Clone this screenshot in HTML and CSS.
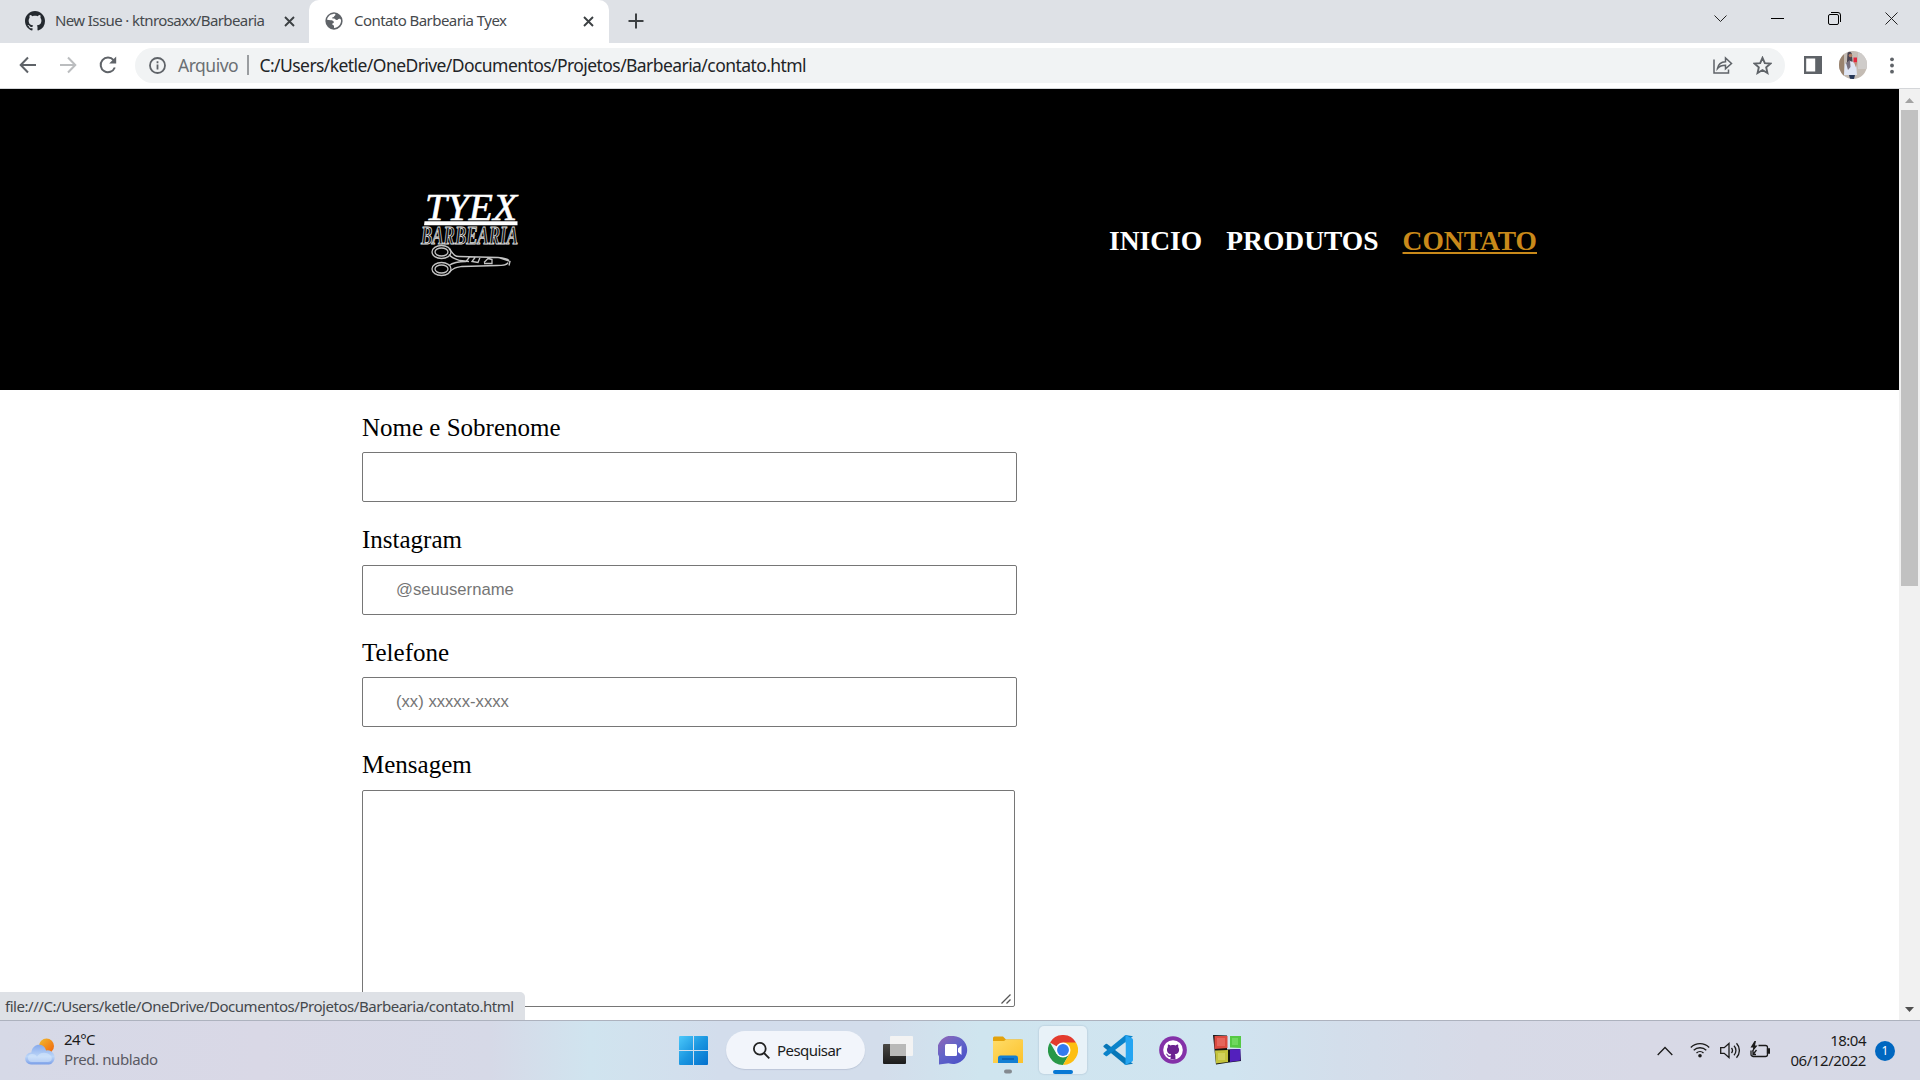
FILE: index.html
```html
<!DOCTYPE html>
<html lang="pt-BR">
<head>
<meta charset="utf-8">
<title>Contato Barbearia Tyex</title>
<link rel="stylesheet" href="styles.css">
</head>
<body>
<div class="screen">
  <div class="tabstrip">
    <div class="tab">
      <svg class="favicon" viewBox="0 0 16 16"><path fill="#24292f" d="M8 0C3.58 0 0 3.58 0 8c0 3.54 2.29 6.53 5.47 7.59.4.07.55-.17.55-.38 0-.19-.01-.82-.01-1.49-2.01.37-2.53-.49-2.69-.94-.09-.23-.48-.94-.82-1.13-.28-.15-.68-.52-.01-.53.63-.01 1.08.58 1.23.82.72 1.21 1.87.87 2.33.66.07-.52.28-.87.51-1.07-1.78-.2-3.64-.89-3.64-3.95 0-.87.31-1.59.82-2.15-.08-.2-.36-1.02.08-2.12 0 0 .67-.21 2.2.82.64-.18 1.32-.27 2-.27s1.36.09 2 .27c1.53-1.04 2.2-.82 2.2-.82.44 1.1.16 1.92.08 2.12.51.56.82 1.27.82 2.15 0 3.07-1.87 3.75-3.65 3.95.29.25.54.73.54 1.48 0 1.07-.01 1.93-.01 2.2 0 .21.15.46.55.38A8.01 8.01 0 0 0 16 8c0-4.42-3.58-8-8-8z"/></svg>
      <span class="tab-title t-issue">New Issue · ktnrosaxx/Barbearia</span>
      <svg class="close" viewBox="0 0 11 11"><path d="M1 1l9 9M10 1l-9 9"/></svg>
    </div>
    <div class="tab active">
      <svg class="favicon" viewBox="0 0 20 20"><circle cx="10" cy="10" r="9.6" fill="#5f6368"/><path fill="#fff" d="M9.2 2.1c1.6-.2 2.4.2 2.4.9 0 1.100-1.500 1-1.500 1.900s-2.200.5-2.200 1.600c0 .8 1 .8 2 .8 1.700 0 1.500 1.700 2.900 1.700 1.500 0 1.600-1.500 3-1.500.9 0 1.700.6 2 1.500.3 5-3.300 8.600-7.800 8.800v-2.200c0-1.200-2-1-2-2.300 0-.9 1.800-.6 1.800-1.900 0-1.700-1.800-2-3.600-2.100L2.300 8.500C2.900 5 5.700 2.400 9.200 2.100z"/></svg>
      <span class="tab-title t-contact">Contato Barbearia Tyex</span>
      <svg class="close" viewBox="0 0 11 11"><path d="M1 1l9 9M10 1l-9 9"/></svg>
    </div>
    <svg class="newtab" viewBox="0 0 16 16"><path d="M8 .5v15M.5 8h15"/></svg>
    <div class="wincontrols">
      <svg width="13" height="13" viewBox="0 0 13 13"><path d="M.5 3.500l6 6 6-6"/></svg>
      <svg width="13" height="13" viewBox="0 0 13 13"><path d="M0 6.500h13" stroke="#000"/></svg>
      <svg width="13" height="13" viewBox="0 0 13 13"><rect x=".5" y="2.500" width="10" height="10" rx="1.500" stroke="#000"/><path d="M3 .5h7a2.500 2.500 0 0 1 2.500 2.500v7" stroke="#000"/></svg>
      <svg width="13" height="13" viewBox="0 0 13 13"><path d="M.5.5l12 12M12.500.5l-12 12"/></svg>
    </div>
  </div>

  <div class="toolbar">
    <div class="navbtns">
      <svg viewBox="0 0 18 18"><path d="M17 9H2M9 1.500L1.700 9 9 16.500"/></svg>
      <svg class="disabled" viewBox="0 0 18 18"><path d="M1 9h15M9 1.500L16.300 9 9 16.500"/></svg>
      <svg viewBox="0 0 18 18"><path d="M15.800 11.500a7.300 7.300 0 1 1-1.200-7.300l1.400 1.600"/><path d="M17.200.5v7h-7z" fill="#5f6368" stroke="none"/></svg>
    </div>
    <div class="omnibox">
      <svg class="info" viewBox="0 0 17 17"><circle cx="8.500" cy="8.500" r="7.500"/><path d="M8.500 7.500v5M8.500 4.300v2"/></svg>
      <span class="scheme">Arquivo</span>
      <span class="sep"></span>
      <span class="url">C:/Users/ketle/OneDrive/Documentos/Projetos/Barbearia/contato.html</span>
      <svg class="share" viewBox="0 0 20 18"><path d="M1 3.500V17h14.500v-3.500M4.500 12.500c.8-4.500 3.500-6.500 8-6.700V2l6 5.500-6 5.300V9.300c-3.500 0-6 .8-8 3.200z"/></svg>
      <svg class="star" viewBox="0 0 18 18"><path d="M9 1.700l2.200 5 5.300.5-4 3.600 1.200 5.300L9 13.300l-4.700 2.800 1.200-5.300-4-3.600 5.300-.5z"/></svg>
    </div>
    <svg class="panel" viewBox="0 0 18 18"><path fill="#5f6368" d="M0 0h18v18H0zM2.200 2.500v13h9v-13z" fill-rule="evenodd"/></svg>
    <svg class="avatar" viewBox="0 0 28 28">
      <defs><clipPath id="av"><circle cx="14" cy="14" r="14"/></clipPath></defs>
      <g clip-path="url(#av)">
        <rect width="28" height="28" fill="#c4bcb4"/><rect width="5" height="28" fill="#99836f"/><rect x="19" width="9" height="18" fill="#cfccca"/>
        <path d="M8.500 2c2-2.500 5-1 4.500 3l.5 5-2 6-4 2z" fill="#4a4450"/><circle cx="11.500" cy="4.500" r="1.800" fill="#b27d63"/>
        <path d="M6 13l5-3 6 2 1 12H5z" fill="#dfe6f5"/><path d="M10 24h6l-1 4h-4z" fill="#253657"/>
        <path d="M7 12l4-3 .5 7-2.500 3z" fill="#77717e"/><rect x="14.500" y="6.500" width="3.500" height="5" fill="#e4263c"/><path d="M15 11.500h3l-1 5z" fill="#bb8973"/>
      </g>
    </svg>
    <svg class="dots" viewBox="0 0 4 17"><circle cx="2" cy="2.300" r="1.900"/><circle cx="2" cy="8.500" r="1.900"/><circle cx="2" cy="14.700" r="1.900"/></svg>
  </div>

  <div class="viewport">
    <div class="page">
      <header class="site-header">
        <svg class="logo" viewBox="0 0 104 90" width="104" height="90">
          <g class="logo-title"><text x="5" y="28.500" textLength="92" lengthAdjust="spacingAndGlyphs">TYEX</text></g>
          <path d="M4.500 30.300h93v3.900H4z" fill="#fff"/>
          <g class="logo-sub"><text x="1" y="52.500" textLength="97" lengthAdjust="spacingAndGlyphs">BARBEARIA</text></g>
          <g transform="translate(0 1.500)" fill="none" stroke="#c4c4c4" stroke-width="1.300">
            <ellipse cx="21.500" cy="59.500" rx="9.500" ry="6.500"/><ellipse cx="21.500" cy="59.500" rx="6.500" ry="4"/>
            <ellipse cx="21.500" cy="76.500" rx="9.500" ry="6.500"/><ellipse cx="21.500" cy="76.500" rx="6.500" ry="4"/>
            <path d="M29 56c4 5 5 8 10 8l39 1c6 .5 10 2 11 3M29 62c3 4 8 5 11 6l9 1M29 80c5-5 7-5 13-6l35-1c5 0 10 0 11-3M29 73c4-3 9-4 17-4l4-5M55 65l-3 4 6 1 2-5M64 70l4-4 4 1v4h-8M78 65l12 4-1 4"/>
          </g>
        </svg>
        <nav class="menu">
          <a>INICIO</a><a>PRODUTOS</a><a class="current">CONTATO</a>
        </nav>
      </header>
      <form class="form">
        <label>Nome e Sobrenome</label>
        <input type="text">
        <label>Instagram</label>
        <input type="text" placeholder="@seuusername">
        <label>Telefone</label>
        <input type="text" placeholder="(xx) xxxxx-xxxx">
        <label>Mensagem</label>
        <div class="message">
          <textarea></textarea>
          <svg class="grip" viewBox="0 0 10 10"><path d="M.5 9.500l9-9M5.500 9.500l4-4"/></svg>
        </div>
      </form>
      <div class="status"><span>file:///C:/Users/ketle/OneDrive/Documentos/Projetos/Barbearia/contato.html</span></div>
    </div>
    <div class="scrollbar">
      <svg class="arrow" viewBox="0 0 9 5"><path d="M0 5l4.500-5L9 5z" fill="#a3a3a3"/></svg>
      <div class="thumb"></div>
      <svg class="arrow down" viewBox="0 0 9 5"><path d="M0 0l4.500 5L9 0z" fill="#505050"/></svg>
    </div>
  </div>

  <div class="taskbar">
    <div class="weather">
      <svg viewBox="0 0 30 27" width="30" height="27">
        <defs><linearGradient id="sun" x1="0" y1="0" x2="1" y2="1"><stop offset="0" stop-color="#f0bd2e"/><stop offset="1" stop-color="#f2600c"/></linearGradient>
        <linearGradient id="cl" x1="0" y1="0" x2="0" y2="1"><stop offset="0" stop-color="#86a9ec"/><stop offset=".6" stop-color="#bcd6f8"/><stop offset="1" stop-color="#7b9fe8"/></linearGradient></defs>
        <circle cx="21.500" cy="8" r="7.500" fill="url(#sun)"/>
        <path d="M6 26.500a5.800 5.800 0 0 1 .3-12C7.500 4.500 19.500 4.500 21 12.500a7 7 0 0 1 3 14z" fill="url(#cl)"/>
        <path d="M7 24a4 4 0 0 1 0-8c3 0 4 1 5 3 2-5 10-6 14-1 2 3 0 6-3 6z" fill="#d8eafc" opacity=".55"/>
      </svg>
      <div class="wtext"><span class="temp">24°C</span><span class="cond">Pred. nublado</span></div>
    </div>
    <div class="apps">
      <svg class="app start" viewBox="0 0 29 29"><defs><linearGradient id="win" x1="0" y1="0" x2="1" y2="1"><stop offset="0" stop-color="#4cc8fa"/><stop offset=".5" stop-color="#1b96e0"/><stop offset="1" stop-color="#0370cd"/></linearGradient></defs><path fill="url(#win)" d="M1 0h13v14H0V1a1 1 0 0 1 1-1zM15 0h13a1 1 0 0 1 1 1v13H15zM0 15h14v14H1a1 1 0 0 1-1-1zM15 15h14v13a1 1 0 0 1-1 1H15z"/></svg>
      <div class="search">
        <svg viewBox="0 0 17 17"><circle cx="6.800" cy="6.800" r="5.900"/><path d="M11 11l5.300 5.300"/></svg>
        <span>Pesquisar</span>
      </div>
      <svg class="app taskview" viewBox="0 0 30 28"><defs><linearGradient id="tv" x1="0" y1="0" x2="0" y2="1"><stop offset="0" stop-color="#4a4946"/><stop offset="1" stop-color="#1c1c1c"/></linearGradient></defs><rect y="8" width="23" height="20" rx="1" fill="url(#tv)"/><rect x="7" width="23" height="20" rx="1" fill="#f3f3f3"/><path d="M7 8h16v12H8a1 1 0 0 1-1-1z" fill="#b9b9b8"/></svg>
      <svg class="app chat" viewBox="0 0 30 29"><defs><linearGradient id="ch" x1="0" y1="0" x2=".8" y2="1"><stop offset="0" stop-color="#9565b5"/><stop offset=".5" stop-color="#6364c8"/><stop offset="1" stop-color="#4b50c8"/></linearGradient></defs><path d="M15.500 0a14 14 0 1 1-5 27.200L1 28.500v-8A14 14 0 0 1 15.500 0z" fill="url(#ch)"/><rect x="7" y="8" width="12" height="12" rx="1.500" fill="#fff"/><path d="M20 12.500l3.500-3v9.500L20 16z" fill="#fff"/></svg>
      <svg class="app folder" viewBox="0 0 30 38"><defs><linearGradient id="fo" x1="0" y1="0" x2="1" y2="1"><stop offset="0" stop-color="#ffdc68"/><stop offset="1" stop-color="#fcc22c"/></linearGradient></defs><path d="M0 2a1.500 1.500 0 0 1 1.500-1.500h8.500l3 3H28a2 2 0 0 1 2 2V12H0z" fill="#e3a20b"/><path d="M0 5h11l2-1.500h17V27H0z" fill="url(#fo)"/><path d="M5 27v-5a2.500 2.500 0 0 1 2.500-2.500h15A2.500 2.500 0 0 1 25 22v5z" fill="#137fd3"/><path d="M9 23h12" stroke="#0a539f" stroke-width="1.200"/><rect x="11" y="33.500" width="8" height="4" rx="2" fill="#848a90"/></svg>
      <div class="chrome-cell">
        <svg viewBox="0 0 48 48" width="30" height="30"><path d="M24 24L3.200 12A24 24 0 0 1 44.800 12z" fill="#e33b2e"/><path d="M3.200 12L13.600 30 34.400 30 24 48A24 24 0 0 1 3.200 12z" fill="#279847"/><path d="M24 12h20.800A24 24 0 0 1 24 48l10.400-18z" fill="#fdbf12"/><circle cx="24" cy="24" r="12" fill="#fff"/><circle cx="24" cy="24" r="9.500" fill="#327bf0"/></svg>
        <span class="running"></span>
      </div>
      <svg class="app vscode" viewBox="0 0 100 100"><path d="M2 36l7-6q2.500-1.500 5 0L100 96l-25 4L2 40q-2-2 0-4z" fill="#0777b8"/><path d="M2 64l7 6q2.500 1.500 5 0L100 4 75 0 2 60q-2 2 0 4z" fill="#0a83ca"/><path d="M70.900 99.300a6 6 0 0 0 4.800-.2l20.600-9.900A6.300 6.300 0 0 0 100 83.600V16.400c0-2.400-1.400-4.600-3.500-5.600L75.900.9a6.200 6.200 0 0 0-7.100 1.200C71 0 75 1.500 75 5v90c0 3.500-4 5-6.200 2.900z" fill="#25a5f2"/><path d="M75 27v46L45 50z" fill="#d3e4ee"/></svg>
      <svg class="app ghd" viewBox="-2 -2 20 20"><circle cx="8" cy="8" r="9.900" fill="#8431a8"/><circle cx="8" cy="8" r="7" fill="#fff"/><path transform="translate(1.200 1.300) scale(.85)" fill="#6b2390" d="M5.470 15.500c.4.070.55-.17.55-.38v-1.490c-2.010.37-2.530-.49-2.690-.94-.09-.23-.48-.94-.82-1.130-.28-.15-.68-.52-.01-.53.63-.01 1.080.58 1.230.82.72 1.210 1.870.87 2.330.66.070-.52.280-.87.510-1.070-1.780-.2-3.640-.89-3.640-3.950 0-.87.31-1.590.82-2.150-.08-.2-.36-1.020.08-2.120 0 0 .67-.21 2.200.82.640-.18 1.320-.27 2-.27s1.360.09 2 .27c1.530-1.040 2.200-.82 2.200-.82.440 1.100.16 1.920.08 2.120.51.56.82 1.270.82 2.150 0 3.070-1.870 3.750-3.650 3.950.29.25.54.73.54 1.480v2.700c0 .21.150.46.550.38z"/></svg>
      <svg class="app blocks" viewBox="0 0 29 30"><path d="M0 0l14 .5v14l13-.5 1 12-12 1.500-13 2z" fill="#111"/><path d="M1.500 1h13v12l-13 1z" fill="#dc4a40"/><path d="M17 1h11v12l-11-.5z" fill="#55c944"/><path d="M2 15.500l13-.5v12l-12 1.500z" fill="#c3c33c"/><path d="M17 14.500l10.500-.5v11.500L17 27z" fill="#5320bd"/><path d="M4 3h8v8H4z" fill="#f08078" opacity=".5"/><path d="M19 3h6v7h-6z" fill="#8ae878" opacity=".5"/><path d="M5 18h7v7H5z" fill="#e0df78" opacity=".5"/></svg>
    </div>
    <div class="tray">
      <svg width="16" height="10" viewBox="0 0 16 10"><path d="M.7 9L8 1.500 15.300 9"/></svg>
      <svg class="wifi" width="20" height="16" viewBox="0 0 20 16"><path d="M.8 5.500a13 13 0 0 1 18.400 0M3.700 8.300a9 9 0 0 1 12.600 0M6.500 11a5 5 0 0 1 7 0"/><circle cx="10" cy="13.700" r="1.800" fill="#1b1b1b" stroke="none"/></svg>
      <svg class="vol" width="20" height="17" viewBox="0 0 20 17"><path d="M.7 5.700h3.500L9 1.500v14l-4.800-4.200H.7zM11.500 6a4 4 0 0 1 0 5M14 3.700a7 7 0 0 1 0 9.600M16.500 1.300a10.500 10.500 0 0 1 0 14.400"/></svg>
      <svg class="bat" width="20" height="18" viewBox="0 0 20 18"><path d="M8.500 4.500h7a2 2 0 0 1 2 2v7a2 2 0 0 1-2 2H3a2 2 0 0 1-2-2V9.500"/><path d="M17.500 8h2v4h-2z" fill="#1b1b1b"/><path d="M4.500 0L.5 6.500h2.700L2.300 11 7.500 4.500H5L6 0z" fill="#1b1b1b" stroke="none"/><path d="M3 9v4.500L6.500 9M3 13.500h3"/></svg>
      <div class="clock"><span class="time">18:04</span><span class="date">06/12/2022</span></div>
      <span class="badge">1</span>
    </div>
  </div>
</div>
</body>
</html>
```
FILE: styles.css
```css
* { box-sizing: border-box; }
body { margin: 0; overflow: hidden; font-family: "Noto Sans", sans-serif; }
svg { display: block; flex: none; }
.screen { width: 1920px; height: 1080px; display: flex; flex-direction: column; background: #fff; }

/* tab strip */
.tabstrip { height: 43px; flex: none; background: #dee1e6; display: flex; align-items: center; }
.tab { width: 309px; height: 43px; padding: 0 14px 1px 25px; display: flex; align-items: center; color: #45494d; }
.tab.active { width: 300px; padding: 0 15px 1px 16px; background: #fff; border-radius: 10px 10px 0 0; }
.favicon { width: 20px; height: 20px; margin-right: 10px; }
.active .favicon { width: 18px; height: 18px; margin-right: 11px; }
.tab-title { font-size: 15px; white-space: nowrap; padding-bottom: 3px; }
.t-issue { letter-spacing: -0.6px; }
.t-contact { letter-spacing: -0.56px; }
.close { width: 11px; height: 11px; margin-left: auto; fill: none; stroke: #3c4043; stroke-width: 1.9; }
.newtab { width: 16px; height: 16px; margin: 0 0 1px 19px; fill: none; stroke: #3c4043; stroke-width: 2; }
.wincontrols { margin-left: auto; padding: 0 22px 6px 0; display: flex; gap: 44px; }
.wincontrols svg { fill: none; stroke: #222; stroke-width: 1; }

/* toolbar */
.toolbar { height: 46px; flex: none; display: flex; align-items: center; padding: 0 26px 1px 19px; border-bottom: 1px solid #d4d6d9; }
.navbtns { display: flex; gap: 22px; width: 116px; }
.navbtns svg { width: 18px; height: 18px; fill: none; stroke: #5f6368; stroke-width: 2; }
.navbtns .disabled { stroke: #bbbdbf; }
.omnibox { width: 1650px; height: 35px; border-radius: 18px; background: #f1f3f4; display: flex; align-items: center; padding: 0 13px 0 14px; font-size: 17.5px; white-space: nowrap; }
.info { width: 17px; height: 17px; margin-right: 12px; fill: none; stroke: #5f6368; stroke-width: 1.8; }
.scheme { width: 69px; color: #6b6f73; letter-spacing: -0.5px; }
.sep { width: 1.500px; height: 20px; background: #9a9da0; margin-right: 11px; }
.url { color: #222427; letter-spacing: -0.57px; }
.share { width: 20px; height: 18px; margin-left: auto; margin-right: 20px; fill: none; stroke: #5f6368; stroke-width: 1.5; }
.star { width: 19px; height: 19px; fill: none; stroke: #5f6368; stroke-width: 1.800; }
.panel { width: 18px; height: 18px; margin-left: 19px; }
.avatar { width: 28px; height: 28px; margin-left: 17px; }
.dots { width: 4px; height: 17px; margin-left: auto; fill: #5f6368; }

/* page */
.viewport { height: 931px; flex: none; display: flex; overflow: hidden; }
.page { width: 1899px; position: relative; }
.site-header { height: 301px; background: #000; display: flex; justify-content: space-between; padding: 102px 362px 0 420px; }
.logo { overflow: visible; }
.logo-title text { font: italic 38.5px "Liberation Serif", serif; fill: #fff; stroke: #fff; stroke-width: 0.6; }
.logo-sub text { font: italic bold 25px "Liberation Serif", serif; fill: #111; stroke: #ddd; stroke-width: 1; }
.menu { display: flex; gap: 24px; margin-top: 33.5px; height: 32px; font: bold 27.5px/32px "Liberation Serif", serif; color: #fff; }
.menu .current { color: #c9891a; text-decoration: underline; }
.form { display: flex; flex-direction: column; padding: 22.500px 0 0 362px; }
.form label { font: 25px/29px "Liberation Serif", serif; color: #000; margin-bottom: 10.500px; }
.form input { width: 655px; height: 50px; margin: 0 0 23px; padding: 0 33px; border: 1px solid #767676; border-radius: 2px; font: 16.670px "Liberation Sans", sans-serif; background: #fff; outline: none; }
.form input::placeholder { color: #757575; }
.message { position: relative; width: 653px; height: 217px; }
.message textarea { display: block; width: 653px; height: 217px; border: 1px solid #767676; border-radius: 2px; resize: none; background: #fff; }
.grip { position: absolute; right: 4px; bottom: 3px; width: 10px; height: 10px; fill: none; stroke: #555; stroke-width: 1.300; }
.status { position: absolute; left: 0; bottom: 0; width: 525px; height: 28px; padding-left: 5px; background: #dee1e6; border-top-right-radius: 5px; font-size: 15px; line-height: 28px; color: #44484c; white-space: nowrap; letter-spacing: -0.46px; }
.scrollbar { width: 21px; background: #f1f1f1; display: flex; flex-direction: column; align-items: center; padding: 9px 0 8px; }
.arrow { width: 9px; height: 5px; }
.thumb { width: 17px; height: 476px; margin-top: 7px; background: #c1c1c1; }
.down { margin-top: auto; }

/* taskbar */
.taskbar { height: 60px; flex: none; display: flex; align-items: flex-start; border-top: 1px solid #adb2be; color: #1b1b1b; font-size: 15px; background: linear-gradient(90deg, #d6d9e7 0, #d9d8e6 260px, #d6d9e7 490px, #d0e4ef 590px, #d3ddec 720px, #d3ddeb 880px, #cfe5ef 980px, #d0e4f0 1230px, #d3deeb 1340px, #d7dae7 1480px, #d8d9e6 1650px, #d6d9e6 1920px); }
.weather { width: 679px; padding: 17px 0 0 25px; display: flex; gap: 9px; }
.wtext { display: flex; flex-direction: column; margin-top: -9px; line-height: 20px; }
.temp { letter-spacing: -0.5px; }
.cond { color: #5a5a63; letter-spacing: -0.4px; }
.apps { display: flex; align-items: flex-start; }
.app { margin-top: 15px; }
.start { width: 29px; height: 29px; }
.search { width: 139px; height: 38px; margin: 10px 0 0 18px; padding-left: 27px; border-radius: 19px; background: #f2f5fb; display: flex; align-items: center; gap: 7px; box-shadow: 0 1px 1px rgba(120,130,160,.25); letter-spacing: -0.55px; }
.search svg { width: 17px; height: 17px; fill: none; stroke: #222; stroke-width: 1.8; }
.taskview { width: 30px; height: 28px; margin-left: 18px; }
.chat { width: 30px; height: 29px; margin-left: 25px; }
.folder { width: 30px; height: 38px; margin-left: 25px; }
.chrome-cell { width: 48px; height: 48px; margin: 5px 0 0 16px; padding-top: 9px; border-radius: 5px; background: #e8f2f8; box-shadow: 0 0 1px 1px rgba(170,190,205,.35); display: flex; flex-direction: column; align-items: center; }
.running { width: 20px; height: 4px; margin-top: 5px; border-radius: 2px; background: #0878d4; }
.vscode { width: 30px; height: 30px; margin: 14px 0 0 16px; }
.ghd { width: 28px; height: 28px; margin-left: 26px; }
.blocks { width: 29px; height: 30px; margin: 14px 0 0 26px; }
.tray { margin-left: auto; padding-right: 25px; display: flex; height: 59px; align-items: center; }
.tray svg { fill: none; stroke: #1b1b1b; stroke-width: 1.300; }
.tray svg.wifi { margin: 0 0 2px 17px; }
.vol { margin-left: 10px; }
.tray svg.bat { margin: 0 0 1px 10px; }
.clock { width: 96px; display: flex; flex-direction: column; align-items: flex-end; line-height: 20px; margin-bottom: 2px; }
.time { letter-spacing: -0.5px; }
.date { letter-spacing: -0.42px; }
.badge { width: 20px; height: 20px; margin-left: 9px; border-radius: 50%; background: #0067c0; color: #fff; font-size: 12px; line-height: 20px; text-align: center; }
```
